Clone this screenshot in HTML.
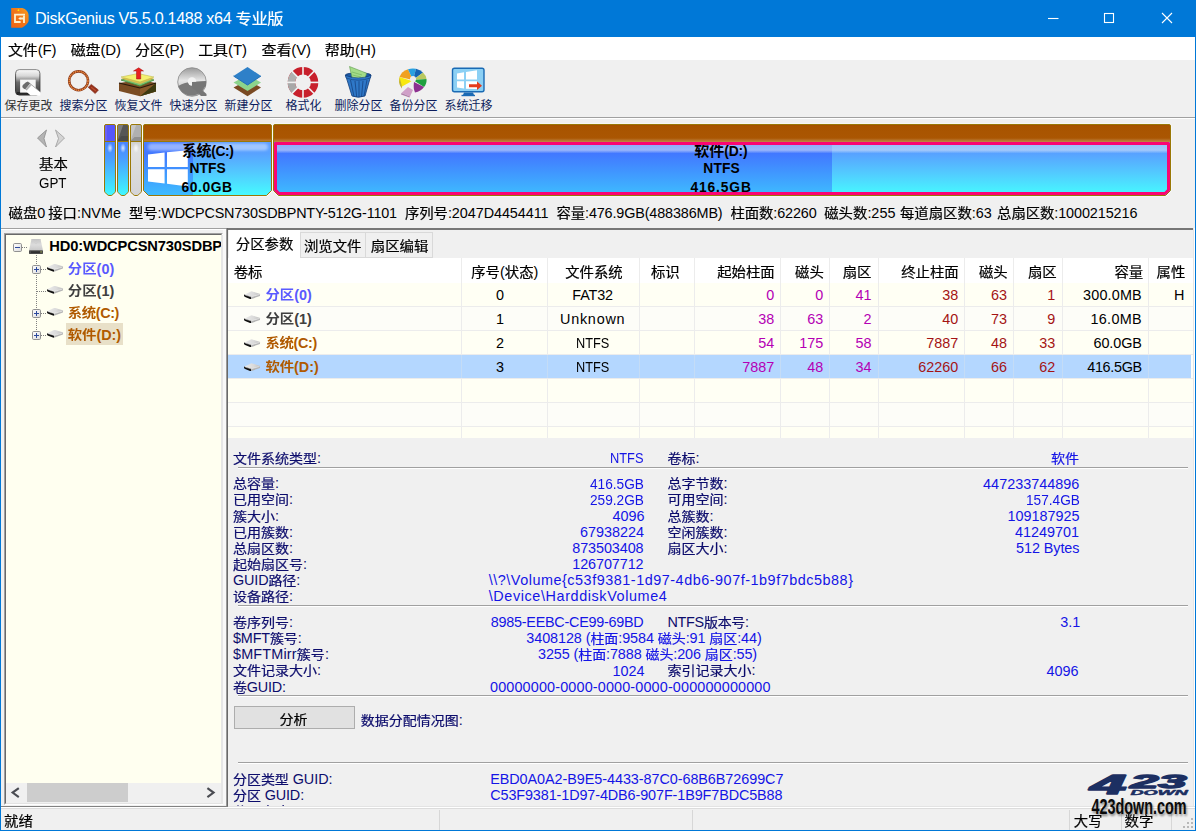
<!DOCTYPE html>
<html lang="zh-CN">
<head>
<meta charset="utf-8">
<title>DiskGenius V5.5.0.1488 x64 专业版</title>
<style>
*,*:before,*:after{box-sizing:border-box;margin:0;padding:0}
html,body{width:1196px;height:831px;overflow:hidden;background:#f0f0f0}
body{font-family:"Liberation Sans","Noto Sans CJK SC",sans-serif;font-size:13.33px;color:#000;position:relative}
.abs,.t{position:absolute;white-space:nowrap}
#win{position:absolute;left:0;top:0;width:1196px;height:831px;background:#f0f0f0;overflow:hidden}
#win:after{content:"";position:absolute;left:0;top:0;width:1196px;height:831px;border:1px solid #0078d7;border-top:none;pointer-events:none}
#title{position:absolute;left:0;top:0;width:1196px;height:37px;background:#0078d7;color:#fff}
#menu{position:absolute;left:1px;top:37px;width:1194px;height:23px;background:#fff}
#tb{position:absolute;left:0;top:60px;width:1194px;height:56px}
.tl{position:absolute;top:38px;width:57px;text-align:center;font-size:12px;line-height:16px;color:#0c1c5c}
.hl{position:absolute;left:1px;width:1194px;height:2px;border-top:1px solid #a0a0a0;border-bottom:1px solid #fff}
.pt{position:absolute;top:142px;text-align:center;font-weight:bold;font-size:13.6px;line-height:18.7px;white-space:nowrap}
#left{position:absolute;left:4px;top:233px;width:219px;height:572px;border:1px solid;border-color:#a0a0a0 #fff #fff #a0a0a0;background:#fffff0}
#left .in{position:absolute;left:0;top:0;right:0;bottom:0;border:1px solid;border-color:#696969 #e3e3e3 #e3e3e3 #696969;overflow:hidden}
#right{position:absolute;left:226px;top:228px;width:969px;height:578px;border-left:2px solid #696969;border-left-color:#9a9a9a;border-top:2px solid #767676;background:#f0f0f0;overflow:hidden}
.tab{position:absolute;border:1px solid #d9d9d9;background:#f0f0f0}
.tab.on{background:#fff;border-color:#fff}
#grid{position:absolute;left:228px;top:258px;width:965px;height:180px;background:#fffffa;overflow:hidden}
.gr{position:absolute;left:0;width:964px;height:24px;border-bottom:1px solid #ececec}
.vl{position:absolute;top:0;width:1px;height:180px;background:#ececec}
.sep{position:absolute;height:2px;border-top:1px solid #a0a0a0;border-bottom:1px solid #fff}
#status{position:absolute;left:1px;top:809px;width:1194px;height:21px;background:#f0f0f0}
.sv{position:absolute;top:1px;width:1px;height:20px;background:#d7d7d7}
.t b{font-weight:inherit;display:inline-block;transform:scaleY(0.92);line-height:inherit;-webkit-text-stroke:0.22px}
.d b{font-size:97.3%}
.B b{-webkit-text-stroke:0;transform:scaleY(0.88)}
</style>
</head>
<body>
<div id="win">
<div id="title">
<svg class="abs" style="left:10px;top:6px" width="22" height="24" viewBox="10 6 22 24">
<defs><linearGradient id="gic" x1="0" y1="1" x2="1" y2="0"><stop offset="0" stop-color="#ee6414"/><stop offset="0.5" stop-color="#f07418"/><stop offset="1" stop-color="#f8a020"/></linearGradient></defs>
<path d="M11.2 8 L22.3 8 Q25 8.4 27 11 Q28.6 13.2 28.6 15 L28.6 21 Q28.4 22.4 26.6 24.2 Q24.4 26.6 22 27.8 L11.2 27.8 Z" fill="url(#gic)"/>
<path d="M25 14.6 L15 14.6 L15 22 L20.6 22" fill="none" stroke="#faf2d0" stroke-width="1.8"/>
<path d="M24 15.4 L24 23 M24.8 18.5 L20 18.5" fill="none" stroke="#faf2d0" stroke-width="1.8"/>
<path d="M20.4 17 L18.2 18.5 L20.4 20 Z" fill="#faf2d0"/>
<path d="M18.4 9.2 L19.3 10.6 L17.5 10.6 Z" fill="#fff000"/><circle cx="18.4" cy="10.3" r="0.8" fill="#fff000"/>
</svg>
<span class="t" id="t9" style="top:8.20px;font-size:16.2px;line-height:20px;height:20px;color:#fff;letter-spacing:-0.337px;left:35.00px;">DiskGenius V5.5.0.1488 x64 <b>专业版</b></span>
<svg class="abs" style="left:1040px;top:8px" width="140" height="22" viewBox="1040 8 140 22" fill="none" stroke="#fff" stroke-width="1.1">
<path d="M1048 18.5 L1058.5 18.5"/><rect x="1104.5" y="13.5" width="9" height="9"/><path d="M1162 13 L1172 23 M1172 13 L1162 23"/>
</svg>
</div>
<div id="menu"></div>
<span class="t" id="t10" style="top:40.00px;font-size:15.0px;line-height:20px;height:20px;letter-spacing:-0.182px;left:8.00px;"><b>文件</b>(F)</span><span class="t" id="t11" style="top:40.00px;font-size:15.0px;line-height:20px;height:20px;letter-spacing:-0.113px;left:70.70px;"><b>磁盘</b>(D)</span><span class="t" id="t12" style="top:40.00px;font-size:15.0px;line-height:20px;height:20px;letter-spacing:-0.167px;left:135.00px;"><b>分区</b>(P)</span><span class="t" id="t13" style="top:40.00px;font-size:15.0px;line-height:20px;height:20px;letter-spacing:-0.092px;left:198.20px;"><b>工具</b>(T)</span><span class="t" id="t14" style="top:40.00px;font-size:15.0px;line-height:20px;height:20px;letter-spacing:-0.109px;left:261.50px;"><b>查看</b>(V)</span><span class="t" id="t15" style="top:40.00px;font-size:15.0px;line-height:20px;height:20px;letter-spacing:0.111px;left:324.70px;"><b>帮助</b>(H)</span>

<div id="tb">
<svg class="abs" style="left:0;top:0" width="500" height="56" viewBox="0 60 500 56">
<defs>
<linearGradient id="gsv" x1="0" y1="0" x2="0" y2="1"><stop offset="0" stop-color="#fafafa"/><stop offset="0.25" stop-color="#d8d8d8"/><stop offset="0.5" stop-color="#6a6a6a"/><stop offset="1" stop-color="#3c3c3c"/></linearGradient>
<linearGradient id="gsvs" x1="0" y1="0" x2="0" y2="1"><stop offset="0" stop-color="#8c8c8c"/><stop offset="0.3" stop-color="#4a4a4a"/><stop offset="1" stop-color="#2a2a2a"/></linearGradient>
<linearGradient id="gcd" x1="0" y1="0" x2="0" y2="1"><stop offset="0" stop-color="#9a9a9a"/><stop offset="0.45" stop-color="#e6e6e6"/><stop offset="1" stop-color="#b0b0b0"/></linearGradient>
</defs>
<!-- 1 save -->
<rect x="15.6" y="69.6" width="24.3" height="25.4" rx="3.6" fill="url(#gsv)" stroke="url(#gsvs)" stroke-width="1"/>
<rect x="17" y="92" width="21" height="2.6" fill="#262626"/>
<rect x="20.1" y="79.6" width="15.6" height="13" fill="#f6f6f6"/>
<path d="M27.6 81.6 L40.3 92 L40.3 95.4 L30.6 95.4 L24 89.4 Z" fill="#ffffff"/>
<path d="M27.6 81.6 L40.3 92" stroke="#8a8a8a" stroke-width="0.7" fill="none"/>
<path d="M22.4 87.2 Q22 85.6 23.4 84.4 L26 82.2 Q27.4 81.2 28.6 82.2 L30.2 83.6 L25.2 89.4 L23.4 88.2 Z" fill="#6c6c6c"/>
<path d="M25.2 89.4 L30.2 83.6 L31.8 85 L26.8 90.8 Z" fill="#c4c4c4"/>
<path d="M26 90 L31 84.3" stroke="#8c8c8c" stroke-width="0.5"/>
<!-- 2 search -->
<path d="M88.2 87.3 L91.3 84.4 L98.4 90 L95.2 93.6 Z" fill="#96301a" stroke="#7a2410" stroke-width="0.6"/>
<path d="M91.2 87.2 L96 91" stroke="#b85030" stroke-width="1.2" fill="none"/>
<circle cx="78.6" cy="80.8" r="9.4" fill="none" stroke="#8c3a1c" stroke-width="2.6"/>
<circle cx="78.6" cy="80.8" r="9.4" fill="none" stroke="#ec8a3c" stroke-width="1.4" stroke-dasharray="1.3 0.7"/>
<!-- 3 recover -->
<path d="M119 83 L140 80 L156 83 L156 91.5 L140 96.3 L119 91 Z" fill="#7a4c22"/>
<path d="M140 88 L156 83 L156 91.5 L140 96.3 Z" fill="#8a5a2a"/>
<path d="M140 96.3 L156 83 L156 91.5 Z" fill="#3c3a10"/>
<path d="M119 83 L140 88 L156 83" fill="none" stroke="#2a1a0c" stroke-width="1.2"/>
<path d="M121 80 L138 76.5 L154 80 L140 86 Z" fill="#7cc070" stroke="#3c8a3c" stroke-width="0.8"/>
<path d="M121 78.5 L138 75 L154 78.5 L140 84 Z" fill="#d8c050"/>
<path d="M121 77 L138 73.5 L154 77 L140 82 Z" fill="#f4f070" stroke="#b8b040" stroke-width="0.5"/>
<path d="M136.5 79 L136.5 71 L133.5 71 L138.7 67.8 L143.5 71 L140.7 71 L140.7 79 Z" fill="#e82020" stroke="#a01010" stroke-width="0.5"/>
<!-- 4 quick -->
<circle cx="192" cy="82" r="14.3" fill="url(#gcd)" stroke="#8a8a8a" stroke-width="0.8"/>
<path d="M178.2 86 Q185 82 192 82 L206 81 A14.3 14.3 0 0 1 178.2 86 Z" fill="#7a7a7a"/>
<circle cx="192" cy="81.5" r="4.2" fill="#f2f2f2"/>
<path d="M192 82 L206 81.5 L206 86 L201 89 L206.5 94 L206.5 96 L201 96 L195 90 L192 88 Z" fill="#767676"/>
<!-- 5 new -->
<path d="M233.5 87.5 L247.5 80 L261 87.5 L247.5 96.2 Z" fill="#7a4a22"/>
<path d="M233.5 82.5 L247.5 75 L261 82.5 L247.5 91 Z" fill="#8cd48c"/>
<path d="M233.5 76 L247.5 67 L261 76 L247.5 85 Z" fill="#2e80c8"/>
<path d="M233.5 76 L247.5 85 L261 76" fill="none" stroke="#2070b8" stroke-width="1"/>
<!-- 6 format -->
<g transform="translate(303,82.4)">
<circle r="11.6" fill="none" stroke="#c8202c" stroke-width="7.4"/>
<path d="M-1.2 -9 A9 9 0 0 0 -1.2 9" transform="rotate(38)" fill="none"/>
<path d="M-15.3 0 A15.3 15.3 0 0 1 -10.2 -11.4 L-5.3 -5.9 A7.9 7.9 0 0 0 -7.9 0 Z" fill="#b0b0b0"/>
<path d="M-15.3 0 A15.3 15.3 0 0 0 -10.2 11.4 L-5.3 5.9 A7.9 7.9 0 0 1 -7.9 0 Z" fill="#a8a8a8"/>
<g stroke="#f0f0f0" stroke-width="1.6">
<line x1="0" y1="-16" x2="0" y2="-7"/><line x1="0" y1="16" x2="0" y2="7"/>
<line x1="-16" y1="0" x2="-7" y2="0"/><line x1="16" y1="0" x2="7" y2="0"/>
<line x1="-11.6" y1="-11.6" x2="-5" y2="-5"/><line x1="11.6" y1="-11.6" x2="5" y2="-5"/>
<line x1="-11.6" y1="11.6" x2="-5" y2="5"/><line x1="11.6" y1="11.6" x2="5" y2="5"/>
</g>
</g>
<!-- 7 delete -->
<path d="M345.5 75 L371 75 L365 96 Q358 98.5 352 96 Z" fill="#2e78c8" stroke="#123c78" stroke-width="0.8"/>
<ellipse cx="358.2" cy="75.2" rx="12.8" ry="2.4" fill="#1c5aa8" stroke="#123c78" stroke-width="0.9"/>
<path d="M349.5 66.5 L366.5 73.2 L365 79 L352.5 79.5 Z" fill="#a4dc88" stroke="#5a9a4a" stroke-width="0.6"/>
<path d="M352 72 L362 75 M352.5 75 L361 77" stroke="#6cae58" stroke-width="0.6" fill="none"/>
<path d="M345.4 75.4 Q358.2 80.4 371 75.4 L370.3 78 Q358.2 82.4 346.2 78 Z" fill="#2e78c8" stroke="#123c78" stroke-width="0.6"/>
<path d="M350.5 80 L354 96.5 M355 81 L356.7 97 M359 81.2 L359 97.2 M363 81 L361.5 97 M367 80 L364 96" stroke="#123c78" stroke-width="0.7" fill="none"/>
<!-- 8 backup -->
<g transform="translate(413,80)">
<path d="M0 0 L-13.5 -3 A13.5 11.5 0 0 1 -5 -10.8 Z" fill="#f0a020"/>
<path d="M0 0 L-5 -10.8 A13.5 11.5 0 0 1 3 -11.3 Z" fill="#28a0e0"/>
<path d="M0 0 L3 -11.3 A13.5 11.5 0 0 1 10 -7.5 Z" fill="#1464b4"/>
<path d="M0 0 L10 -7.5 A13.5 11.5 0 0 1 13.5 -1 Z" fill="#b8c860"/>
<path d="M0 0 L13.5 -1 A13.5 11.5 0 0 1 11 7 Z" fill="#20a040"/>
<path d="M1 2 L11 7 A13.5 11.5 0 0 1 2 12.5 Q0 8 1 2 Z" fill="#8c3090"/>
<path d="M-1 1 L-13.5 -3 A13.5 11.5 0 0 0 -11 6.5 Z" fill="#f8e810"/>
<path d="M-13.5 -3 L-13.5 -1 A13.5 11.5 0 0 0 -11 8.5 L-11 6.5 Z" fill="#c0b030"/>
<circle cx="0" cy="-1" r="3" fill="#ececec"/>
<path d="M-5 7 L0 10 L-3 16.5 L-11.5 13 Z" fill="#d0a0c8"/>
<path d="M-11.5 13 L-3 16.5 L-3.5 17.5 L-12 14.5Z" fill="#b080a8"/>
</g>
<!-- 9 migrate -->
<rect x="452.5" y="68.2" width="31.5" height="23.5" rx="2" fill="#8cd0f4" stroke="#1a6ab4" stroke-width="1.4"/>
<path d="M457 73.5 L464 72.3 L464 79.5 L457 79.5 Z M466 72 L477 70.3 L477 79.5 L466 79.5 Z M457 81.3 L464 81.3 L464 88.6 L457 87.5 Z M466 81.3 L477 81.3 L477 89 L466 88.8Z" fill="#ffffff"/>
<path d="M469 84.3 L477 84.3 L477 81.5 L482 85.8 L477 90 L477 87.3 L469 87.3 Z" fill="#e43a1c"/>
<path d="M464 92.5 L473 92.5 L474 95 L463 95 Z" fill="#1a6ab4"/>
<rect x="461.5" y="94.8" width="13.5" height="1.4" fill="#1a6ab4"/>
</svg>
<div class="tl" style="left:0;color:#333">保存更改</div>
<div class="tl" style="left:55px">搜索分区</div>
<div class="tl" style="left:110px">恢复文件</div>
<div class="tl" style="left:165px">快速分区</div>
<div class="tl" style="left:220px">新建分区</div>
<div class="tl" style="left:275px">格式化</div>
<div class="tl" style="left:330px">删除分区</div>
<div class="tl" style="left:385px">备份分区</div>
<div class="tl" style="left:440px">系统迁移</div>
</div>
<div class="hl" style="top:117px"></div>
<div id="map">
<svg class="abs" style="left:0;top:118px" width="1194" height="82" viewBox="0 118 1194 82">
<defs>
<linearGradient id="gb" gradientUnits="userSpaceOnUse" x1="0" y1="142" x2="0" y2="195"><stop offset="0" stop-color="#4a84ff"/><stop offset="0.3" stop-color="#4a9cff"/><stop offset="1" stop-color="#40f8ff"/></linearGradient>
<linearGradient id="gu" gradientUnits="userSpaceOnUse" x1="0" y1="142" x2="0" y2="195"><stop offset="0" stop-color="#4a7eff"/><stop offset="0.22" stop-color="#4278ff"/><stop offset="1" stop-color="#3ebcff"/></linearGradient>
<linearGradient id="gf" gradientUnits="userSpaceOnUse" x1="0" y1="142" x2="0" y2="195"><stop offset="0" stop-color="#5e9cff"/><stop offset="0.22" stop-color="#58a2ff"/><stop offset="0.6" stop-color="#52ccff"/><stop offset="1" stop-color="#46faff"/></linearGradient>
<linearGradient id="gbr" gradientUnits="userSpaceOnUse" x1="0" y1="124" x2="0" y2="142"><stop offset="0" stop-color="#a04c00"/><stop offset="0.15" stop-color="#a85400"/><stop offset="0.78" stop-color="#aa5602"/><stop offset="1" stop-color="#c08848"/></linearGradient>
<linearGradient id="ggr" gradientUnits="userSpaceOnUse" x1="0" y1="142" x2="0" y2="195"><stop offset="0" stop-color="#cfcfcf"/><stop offset="0.15" stop-color="#e0e0e0"/><stop offset="1" stop-color="#d4d4d6"/></linearGradient>
<linearGradient id="ghl" x1="0" y1="0" x2="0" y2="1"><stop offset="0" stop-color="#f0f2f6" stop-opacity="0.42"/><stop offset="0.6" stop-color="#f0f2f6" stop-opacity="0.5"/><stop offset="1" stop-color="#f0f2f6" stop-opacity="0"/></linearGradient>
<radialGradient id="gsp"><stop offset="0" stop-color="#fff" stop-opacity="0.8"/><stop offset="1" stop-color="#fff" stop-opacity="0"/></radialGradient>
<filter id="bl" x="-5%" y="-50%" width="110%" height="200%"><feGaussianBlur stdDeviation="1.6 1"/></filter>

<clipPath id="cb0"><path d="M104.5 126.0 Q104.5 124.5 106.0 124.5 L114.0 124.5 Q115.5 124.5 115.5 126.0 L115.5 191.1 Q115.5 191.9 114.7 192.70000000000002 L112.7 194.7 Q111.9 195.5 111.10000000000001 195.5 L108.89999999999999 195.5 Q108.1 195.5 107.3 194.7 L105.3 192.70000000000002 Q104.5 191.9 104.5 191.1 Z"/></clipPath>
<clipPath id="cb1"><path d="M117.5 126.0 Q117.5 124.5 119.0 124.5 L127.0 124.5 Q128.5 124.5 128.5 126.0 L128.5 191.1 Q128.5 191.9 127.7 192.70000000000002 L125.7 194.7 Q124.9 195.5 124.10000000000001 195.5 L121.89999999999999 195.5 Q121.1 195.5 120.3 194.7 L118.3 192.70000000000002 Q117.5 191.9 117.5 191.1 Z"/></clipPath>
<clipPath id="cb2"><path d="M130.5 126.0 Q130.5 124.5 132.0 124.5 L140.0 124.5 Q141.5 124.5 141.5 126.0 L141.5 191.1 Q141.5 191.9 140.7 192.70000000000002 L138.70000000000002 194.7 Q137.9 195.5 137.1 195.5 L134.9 195.5 Q134.1 195.5 133.29999999999998 194.7 L131.3 192.70000000000002 Q130.5 191.9 130.5 191.1 Z"/></clipPath>
<clipPath id="cc"><path d="M143.5 126.0 Q143.5 124.5 145.0 124.5 L270.0 124.5 Q271.5 124.5 271.5 126.0 L271.5 190.5 L266.5 195.5 L148.5 195.5 L143.5 190.5 Z"/></clipPath>
<clipPath id="cd"><path d="M273.5 126.0 Q273.5 124.5 275.0 124.5 L1169.0 124.5 Q1170.5 124.5 1170.5 126.0 L1170.5 190.5 L1165.5 195.5 L278.5 195.5 L273.5 190.5 Z"/></clipPath>
</defs>
<path d="M104.5 126.0 Q104.5 124.5 106.0 124.5 L114.0 124.5 Q115.5 124.5 115.5 126.0 L115.5 191.1 Q115.5 191.9 114.7 192.70000000000002 L112.7 194.7 Q111.9 195.5 111.10000000000001 195.5 L108.89999999999999 195.5 Q108.1 195.5 107.3 194.7 L105.3 192.70000000000002 Q104.5 191.9 104.5 191.1 Z" stroke="#fff" stroke-opacity="0.55" stroke-width="2.6" fill="none"/>
<g clip-path="url(#cb0)"><rect x="104.5" y="141" width="11.0" height="56" fill="url(#gb)"/><rect x="104.5" y="124" width="11.0" height="17" fill="#5656fa"/>
<rect x="104.5" y="124" width="2.5" height="17" fill="#6c62f2"/>
<ellipse cx="110.0" cy="148" rx="3" ry="5" fill="url(#gsp)"/>
</g>
<path d="M104.5 126.0 Q104.5 124.5 106.0 124.5 L114.0 124.5 Q115.5 124.5 115.5 126.0 L115.5 191.1 Q115.5 191.9 114.7 192.70000000000002 L112.7 194.7 Q111.9 195.5 111.10000000000001 195.5 L108.89999999999999 195.5 Q108.1 195.5 107.3 194.7 L105.3 192.70000000000002 Q104.5 191.9 104.5 191.1 Z" fill="none" stroke="#9a7806" stroke-width="1"/>
<line x1="104.5" y1="141.5" x2="115.5" y2="141.5" stroke="#9a7806" stroke-width="1"/>
<path d="M117.5 126.0 Q117.5 124.5 119.0 124.5 L127.0 124.5 Q128.5 124.5 128.5 126.0 L128.5 191.1 Q128.5 191.9 127.7 192.70000000000002 L125.7 194.7 Q124.9 195.5 124.10000000000001 195.5 L121.89999999999999 195.5 Q121.1 195.5 120.3 194.7 L118.3 192.70000000000002 Q117.5 191.9 117.5 191.1 Z" stroke="#fff" stroke-opacity="0.55" stroke-width="2.6" fill="none"/>
<g clip-path="url(#cb1)"><rect x="117.5" y="141" width="11.0" height="56" fill="url(#gb)"/><rect x="117.5" y="124" width="11.0" height="17" fill="#565656"/>
<path d="M117.5 124 L123.5 124 L117.5 141 Z" fill="#7c7c7c"/><path d="M117.5 141 L121.5 136 L128.5 136 L128.5 141Z" fill="#4a4a4a"/>
<ellipse cx="123.0" cy="148" rx="3" ry="5" fill="url(#gsp)"/>
</g>
<path d="M117.5 126.0 Q117.5 124.5 119.0 124.5 L127.0 124.5 Q128.5 124.5 128.5 126.0 L128.5 191.1 Q128.5 191.9 127.7 192.70000000000002 L125.7 194.7 Q124.9 195.5 124.10000000000001 195.5 L121.89999999999999 195.5 Q121.1 195.5 120.3 194.7 L118.3 192.70000000000002 Q117.5 191.9 117.5 191.1 Z" fill="none" stroke="#9a7806" stroke-width="1"/>
<line x1="117.5" y1="141.5" x2="128.5" y2="141.5" stroke="#9a7806" stroke-width="1"/>
<path d="M130.5 126.0 Q130.5 124.5 132.0 124.5 L140.0 124.5 Q141.5 124.5 141.5 126.0 L141.5 191.1 Q141.5 191.9 140.7 192.70000000000002 L138.70000000000002 194.7 Q137.9 195.5 137.1 195.5 L134.9 195.5 Q134.1 195.5 133.29999999999998 194.7 L131.3 192.70000000000002 Q130.5 191.9 130.5 191.1 Z" stroke="#fff" stroke-opacity="0.55" stroke-width="2.6" fill="none"/>
<g clip-path="url(#cb2)"><rect x="130.5" y="141" width="11.0" height="56" fill="url(#ggr)"/><rect x="130.5" y="124" width="11.0" height="17" fill="#b0b0b0"/>
<path d="M130.5 124 L136.5 124 L130.5 141 Z" fill="#c6c6c6"/><path d="M130.5 141 L134.5 137 L141.5 137 L141.5 141Z" fill="#909090"/>
<ellipse cx="136.0" cy="148" rx="3" ry="5" fill="url(#gsp)"/>
</g>
<path d="M130.5 126.0 Q130.5 124.5 132.0 124.5 L140.0 124.5 Q141.5 124.5 141.5 126.0 L141.5 191.1 Q141.5 191.9 140.7 192.70000000000002 L138.70000000000002 194.7 Q137.9 195.5 137.1 195.5 L134.9 195.5 Q134.1 195.5 133.29999999999998 194.7 L131.3 192.70000000000002 Q130.5 191.9 130.5 191.1 Z" fill="none" stroke="#9a7806" stroke-width="1"/>
<line x1="130.5" y1="141.5" x2="141.5" y2="141.5" stroke="#9a7806" stroke-width="1"/>
<path d="M143.5 126.0 Q143.5 124.5 145.0 124.5 L270.0 124.5 Q271.5 124.5 271.5 126.0 L271.5 190.5 L266.5 195.5 L148.5 195.5 L143.5 190.5 Z" stroke="#fff" stroke-opacity="0.55" stroke-width="2.6" fill="none"/>
<g clip-path="url(#cc)"><rect x="143" y="124" width="130" height="18" fill="url(#gbr)"/><rect x="143" y="142" width="50" height="55" fill="url(#gu)"/><rect x="193" y="142" width="80" height="55" fill="url(#gf)"/>
<rect x="148" y="143.5" width="120" height="7" rx="3.5" fill="#fff" fill-opacity="0.42" filter="url(#bl)"/>
<path d="M148 154.6 L164.6 152.6 L164.6 167 L148 167 Z M167 152.3 L187.8 150.2 L187.8 167 L167 167 Z M148 169.2 L164.6 169.2 L164.6 183.5 L148 181.6 Z M167 169.2 L187.8 169.2 L187.8 186.4 L167 183.8 Z" fill="#fff"/>
</g>
<path d="M143.5 126.0 Q143.5 124.5 145.0 124.5 L270.0 124.5 Q271.5 124.5 271.5 126.0 L271.5 190.5 L266.5 195.5 L148.5 195.5 L143.5 190.5 Z" fill="none" stroke="#9a7806" stroke-width="1"/><line x1="143.5" y1="141.5" x2="271.5" y2="141.5" stroke="#9a7806"/>
<path d="M273.5 126.0 Q273.5 124.5 275.0 124.5 L1169.0 124.5 Q1170.5 124.5 1170.5 126.0 L1170.5 190.5 L1165.5 195.5 L278.5 195.5 L273.5 190.5 Z" stroke="#fff" stroke-opacity="0.55" stroke-width="2.6" fill="none"/>
<g clip-path="url(#cd)"><rect x="273" y="124" width="899" height="18" fill="url(#gbr)"/><rect x="273" y="142" width="559" height="55" fill="url(#gu)"/><rect x="832" y="142" width="340" height="55" fill="url(#gf)"/>
<rect x="277" y="145" width="890" height="8.5" fill="url(#ghl)"/></g>
<path d="M273.5 126.0 Q273.5 124.5 275.0 124.5 L1169.0 124.5 Q1170.5 124.5 1170.5 126.0 L1170.5 190.5 L1165.5 195.5 L278.5 195.5 L273.5 190.5 Z" fill="none" stroke="#9a7806" stroke-width="1"/>
<path d="M275.5 143.5 L1168.5 143.5 L1168.5 190 L1165 193.5 L279 193.5 L275.5 190 Z" fill="none" stroke="#fa0573" stroke-width="3" stroke-linejoin="round"/>
</svg>
<span class="t B" id="t16" style="top:140.60px;font-size:13.8px;line-height:20px;height:20px;font-weight:bold;letter-spacing:-0.380px;left:182.00px;"><span style="font-size:15.0px">系统</span>(C:)</span><span class="t B" id="t17" style="top:159.00px;font-size:13.8px;line-height:20px;height:20px;font-weight:bold;letter-spacing:0.019px;left:189.50px;">NTFS</span><span class="t B" id="t18" style="top:177.80px;font-size:13.8px;line-height:20px;height:20px;font-weight:bold;letter-spacing:0.608px;left:181.50px;">60.0GB</span>
<div class="abs" style="left:276px;top:145px;width:892px;height:47px;overflow:hidden"><span class="t B" id="t19" style="top:-4.40px;font-size:13.8px;line-height:20px;height:20px;font-weight:bold;letter-spacing:-0.068px;left:418.30px;"><span style="font-size:15.0px">软件</span>(D:)</span><span class="t B" id="t20" style="top:14.00px;font-size:13.8px;line-height:20px;height:20px;font-weight:bold;letter-spacing:0.144px;left:427.30px;">NTFS</span><span class="t B" id="t21" style="top:32.80px;font-size:13.8px;line-height:20px;height:20px;font-weight:bold;letter-spacing:0.854px;left:414.50px;">416.5GB</span></div>
<svg class="abs" style="left:34px;top:128px" width="36" height="22" viewBox="0 0 36 22"><path d="M12.5 2 L3.5 10 L12.5 19 L10 10.5 Z" fill="#b4b4b4" stroke="#8c8c8c" stroke-width="0.8"/><path d="M21.5 2 L30.5 10 L21.5 19 L24.5 10.5 Z" fill="#d4d4d4" stroke="#9a9a9a" stroke-width="0.8"/></svg>
<span class="t" id="t22" style="top:154.20px;font-size:14.4px;line-height:20px;height:20px;left:39.00px;"><b>基本</b></span><span class="t" id="t23" style="top:172.70px;font-size:14.4px;line-height:20px;height:20px;transform:scaleX(0.9293);transform-origin:0 50%;left:39.00px;">GPT</span>
</div>
<div id="info">
<span class="t" id="t0" style="top:202.50px;font-size:14.4px;line-height:20px;height:20px;left:8.50px;"><b>磁盘</b>0</span>
<span class="t" id="t1" style="top:202.50px;font-size:14.4px;line-height:20px;height:20px;letter-spacing:-0.007px;left:48.20px;"><b>接口</b>:NVMe</span>
<span class="t" id="t2" style="top:202.50px;font-size:14.4px;line-height:20px;height:20px;letter-spacing:-0.187px;left:129.00px;"><b>型号</b>:WDCPCSN730SDBPNTY-512G-1101</span>
<span class="t" id="t3" style="top:202.50px;font-size:14.4px;line-height:20px;height:20px;letter-spacing:-0.056px;left:404.90px;"><b>序列号</b>:2047D4454411</span>
<span class="t" id="t4" style="top:202.50px;font-size:14.4px;line-height:20px;height:20px;letter-spacing:-0.138px;left:556.50px;"><b>容量</b>:476.9GB(488386MB)</span>
<span class="t" id="t5" style="top:202.50px;font-size:14.4px;line-height:20px;height:20px;letter-spacing:-0.123px;left:730.50px;"><b>柱面数</b>:62260</span>
<span class="t" id="t6" style="top:202.50px;font-size:14.4px;line-height:20px;height:20px;left:824.20px;"><b>磁头数</b>:255</span>
<span class="t" id="t7" style="top:202.50px;font-size:14.4px;line-height:20px;height:20px;left:899.90px;"><b>每道扇区数</b>:63</span>
<span class="t" id="t8" style="top:202.50px;font-size:14.4px;line-height:20px;height:20px;letter-spacing:-0.092px;left:997.10px;"><b>总扇区数</b>:1000215216</span>
</div>
<div class="hl" style="top:228px"></div>
<div id="left"><div class="in"></div></div>
<svg class="abs" style="left:6px;top:236px" width="120" height="110" viewBox="6 236 120 110">
<defs>
<linearGradient id="gbx" x1="0" y1="0" x2="1" y2="1"><stop offset="0" stop-color="#fff"/><stop offset="1" stop-color="#dcdcdc"/></linearGradient>
<linearGradient id="ghd" x1="0" y1="0" x2="0" y2="1"><stop offset="0" stop-color="#c4c4c4"/><stop offset="0.5" stop-color="#dcdcdc"/><stop offset="1" stop-color="#c8c8c8"/></linearGradient>
<linearGradient id="gdr" x1="0" y1="0" x2="1" y2="0"><stop offset="0" stop-color="#ececec"/><stop offset="0.6" stop-color="#dadada"/><stop offset="1" stop-color="#c0c0c0"/></linearGradient>
<g id="drv"><path d="M0.3 3.5 L7.2 0.2 Q7.8 0 8.6 0.2 L15.8 2.5 Q16.5 2.9 16.2 3.3 L7.3 5.7 Z" fill="url(#gdr)"/><path d="M0.2 3.4 L7.3 5.6 L7.2 7.8 Q6.8 7.9 6.2 7.7 L0.8 5.6 Q0 5.2 0.2 3.4 Z" fill="#0e0e0e"/><path d="M7.3 5.6 L16.3 3 L16.1 4.8 L7.9 7.7 Q7.5 7.9 7.2 7.8 Z" fill="#b4b4b4"/><path d="M1 3.7 L7.3 5.7 L15.6 3.3" fill="none" stroke="#f6f6f6" stroke-width="0.5"/></g>
<g id="bx"><rect x="0.5" y="0.5" width="8" height="8" rx="1.2" fill="url(#gbx)" stroke="#919191"/></g>
</defs>
<g stroke="#808080" stroke-width="1" stroke-dasharray="1 1" fill="none">
<path d="M36.5 255 L36.5 336"/><path d="M22 247.5 L28 247.5"/>
<path d="M41 269.5 L46 269.5"/><path d="M37 291.5 L46 291.5"/><path d="M41 313.5 L46 313.5"/><path d="M41 335.5 L46 335.5"/>
</g>
<use href="#bx" x="13" y="243"/><path d="M15 247.5 L20 247.5" stroke="#2c4a9c" stroke-width="1"/>
<use href="#bx" x="32" y="265"/><path d="M34 269.5 L39 269.5 M36.5 267 L36.5 272" stroke="#2c4a9c" stroke-width="1"/>
<use href="#bx" x="32" y="309"/><path d="M34 313.5 L39 313.5 M36.5 311 L36.5 316" stroke="#2c4a9c" stroke-width="1"/>
<use href="#bx" x="32" y="331"/><path d="M34 335.5 L39 335.5 M36.5 333 L36.5 338" stroke="#2c4a9c" stroke-width="1"/>
<path d="M31.5 239 L40.5 239 L43 250.5 L29 250.5 Z" fill="url(#ghd)"/><path d="M31.5 239 L36 244 L40.5 239" fill="none" stroke="#cfcfcf" stroke-width="0.8"/>
<rect x="29" y="250.3" width="14" height="3.6" rx="0.6" fill="#4a4a4a"/><rect x="31" y="251.6" width="9" height="1" fill="#202020"/><rect x="40.6" y="251.4" width="1" height="1" fill="#b8c840"/>
<use href="#drv" x="46.8" y="263.8"/><use href="#drv" x="46.8" y="285.8"/><use href="#drv" x="46.8" y="307.8"/><use href="#drv" x="46.8" y="329.8"/>
<rect x="66" y="323" width="57" height="22" fill="#e8e0c8"/>
</svg>
<div class="abs" style="left:6px;top:236px;width:215.5px;height:24px;overflow:hidden"><span class="t B" id="t24" style="top:-0.40px;font-size:14.7px;line-height:20px;height:20px;font-weight:bold;letter-spacing:-0.154px;left:43.30px;">HD0:WDCPCSN730SDBP</span></div>
<span class="t B" id="t25" style="top:258.60px;font-size:14.4px;line-height:20px;height:20px;color:#5a5aff;font-weight:bold;left:67.80px;"><b>分区</b>(0)</span>
<span class="t B" id="t26" style="top:280.60px;font-size:14.4px;line-height:20px;height:20px;color:#404040;font-weight:bold;left:67.80px;"><b>分区</b>(1)</span>
<span class="t B" id="t27" style="top:302.60px;font-size:14.4px;line-height:20px;height:20px;color:#b05a00;font-weight:bold;letter-spacing:-0.394px;left:67.80px;"><b>系统</b>(C:)</span>
<span class="t B" id="t28" style="top:324.60px;font-size:14.4px;line-height:20px;height:20px;color:#b05a00;font-weight:bold;letter-spacing:-0.081px;left:67.80px;"><b>软件</b>(D:)</span>
<div class="abs" style="left:6px;top:783px;width:215px;height:20px;background:#f0f0f0">
<div class="abs" style="left:21px;top:0;width:101px;height:19px;background:#cdcdcd"></div>
<svg class="abs" style="left:0;top:0" width="215" height="20" viewBox="0 0 215 20" fill="none" stroke="#4a4c52" stroke-width="2.1"><path d="M12.8 5.1 L6.6 9.6 L12.8 14.1"/><path d="M201.4 5.1 L207.6 9.6 L201.4 14.1"/></svg>
</div>

<div id="right"></div>
<div class="abs" style="left:227px;top:228px;width:1px;height:578px;background:#696969"></div>
<div class="abs" style="left:1193px;top:228px;width:1px;height:578px;background:#e6e6e6"></div>
<div class="abs" style="left:1194px;top:228px;width:1px;height:579px;background:#fff"></div>
<div class="abs" style="left:221px;top:235px;width:2px;height:569px;background:#e6e6e6"></div>
<div class="abs" style="left:223px;top:230px;width:3px;height:575px;background:#f8f8f8"></div>
<div class="tab on" style="left:229px;top:230px;width:71px;height:29px"></div>
<div class="tab" style="left:300px;top:232px;width:66px;height:26px"></div>
<div class="tab" style="left:365px;top:232px;width:68px;height:26px"></div>
<span class="t" id="t29" style="top:234.40px;font-size:14.4px;line-height:20px;height:20px;left:235.80px;"><b>分区参数</b></span><span class="t" id="t30" style="top:236.40px;font-size:14.4px;line-height:20px;height:20px;left:303.90px;"><b>浏览文件</b></span><span class="t" id="t31" style="top:236.40px;font-size:14.4px;line-height:20px;height:20px;left:370.80px;"><b>扇区编辑</b></span>
<div id="grid">
<div class="abs" style="left:0;top:0;width:965px;height:25px;background:#fff"></div>
<div class="abs" style="left:0;top:25px;width:965px;height:24px;background:#fffff4"></div>
<div class="abs" style="left:0;top:49px;width:965px;height:24px;background:#fdfdf8"></div>
<div class="abs" style="left:0;top:73px;width:965px;height:24px;background:#fffff4"></div>
<div class="abs" style="left:0;top:121px;width:965px;height:24px;background:#fffff4"></div>
<div class="abs" style="left:0;top:145px;width:965px;height:24px;background:#fdfdf8"></div>
<div class="abs" style="left:0;top:169px;width:965px;height:11px;background:#fffff4"></div>
<div class="abs" style="left:0;top:48px;width:965px;height:1px;background:#ececec"></div>
<div class="abs" style="left:0;top:72px;width:965px;height:1px;background:#ececec"></div>
<div class="abs" style="left:0;top:96px;width:965px;height:1px;background:#ececec"></div>
<div class="abs" style="left:0;top:120px;width:965px;height:1px;background:#ececec"></div>
<div class="abs" style="left:0;top:144px;width:965px;height:1px;background:#ececec"></div>
<div class="abs" style="left:0;top:168px;width:965px;height:1px;background:#ececec"></div>
<div class="vl" style="left:233px"></div>
<div class="vl" style="left:319px"></div>
<div class="vl" style="left:411px"></div>
<div class="vl" style="left:466px"></div>
<div class="vl" style="left:552px"></div>
<div class="vl" style="left:601px"></div>
<div class="vl" style="left:650px"></div>
<div class="vl" style="left:736px"></div>
<div class="vl" style="left:785px"></div>
<div class="vl" style="left:834px"></div>
<div class="vl" style="left:920px"></div>
<div class="abs" style="left:0;top:97px;width:963px;height:23px;background:#b4d7ff"></div>
<div class="abs" style="left:233px;top:97px;width:1px;height:23px;background:#c4dcf6"></div>
<div class="abs" style="left:319px;top:97px;width:1px;height:23px;background:#c4dcf6"></div>
<div class="abs" style="left:411px;top:97px;width:1px;height:23px;background:#c4dcf6"></div>
<div class="abs" style="left:466px;top:97px;width:1px;height:23px;background:#c4dcf6"></div>
<div class="abs" style="left:552px;top:97px;width:1px;height:23px;background:#c4dcf6"></div>
<div class="abs" style="left:601px;top:97px;width:1px;height:23px;background:#c4dcf6"></div>
<div class="abs" style="left:650px;top:97px;width:1px;height:23px;background:#c4dcf6"></div>
<div class="abs" style="left:736px;top:97px;width:1px;height:23px;background:#c4dcf6"></div>
<div class="abs" style="left:785px;top:97px;width:1px;height:23px;background:#c4dcf6"></div>
<div class="abs" style="left:834px;top:97px;width:1px;height:23px;background:#c4dcf6"></div>
<div class="abs" style="left:920px;top:97px;width:1px;height:23px;background:#c4dcf6"></div>
</div>
<span class="t" id="t32" style="top:261.60px;font-size:14.4px;line-height:20px;height:20px;left:233.70px;"><b>卷标</b></span><span class="t" id="t33" style="top:261.60px;font-size:14.4px;line-height:20px;height:20px;left:471.20px;"><b>序号</b>(<b>状态</b>)</span><span class="t" id="t34" style="top:261.60px;font-size:14.4px;line-height:20px;height:20px;left:565.20px;"><b>文件系统</b></span><span class="t" id="t35" style="top:261.60px;font-size:14.4px;line-height:20px;height:20px;left:650.90px;"><b>标识</b></span>
<span class="t" id="t36" style="top:261.60px;font-size:14.4px;line-height:20px;height:20px;left:717.20px;"><b>起始柱面</b></span><span class="t" id="t37" style="top:261.60px;font-size:14.4px;line-height:20px;height:20px;left:795.00px;"><b>磁头</b></span><span class="t" id="t38" style="top:261.60px;font-size:14.4px;line-height:20px;height:20px;left:842.70px;"><b>扇区</b></span><span class="t" id="t39" style="top:261.60px;font-size:14.4px;line-height:20px;height:20px;left:901.20px;"><b>终止柱面</b></span><span class="t" id="t40" style="top:261.60px;font-size:14.4px;line-height:20px;height:20px;left:978.90px;"><b>磁头</b></span><span class="t" id="t41" style="top:261.60px;font-size:14.4px;line-height:20px;height:20px;left:1027.90px;"><b>扇区</b></span><span class="t" id="t42" style="top:261.60px;font-size:14.4px;line-height:20px;height:20px;left:1114.40px;"><b>容量</b></span><span class="t" id="t43" style="top:261.60px;font-size:14.4px;line-height:20px;height:20px;left:1156.50px;"><b>属性</b></span>
<svg class="abs" style="left:243px;top:290px" width="20" height="84" viewBox="0 0 20 84">
<use href="#drv" x="0.8" y="1.2"/>
<use href="#drv" x="0.8" y="25.2"/>
<use href="#drv" x="0.8" y="49.2"/>
<use href="#drv" x="0.8" y="73.2"/>
</svg>
<span class="t B" id="t44" style="top:284.70px;font-size:14.4px;line-height:20px;height:20px;color:#5a5aff;font-weight:bold;left:265.40px;"><b>分区</b>(0)</span>
<span class="t" id="t45" style="top:285.00px;font-size:14.4px;line-height:20px;height:20px;left:495.90px;">0</span>
<span class="t" id="t46" style="top:285.00px;font-size:14.4px;line-height:20px;height:20px;letter-spacing:-0.126px;left:572.30px;">FAT32</span>
<span class="t" id="t116" style="top:285.00px;font-size:14.4px;line-height:20px;height:20px;color:#b400b4;right:421.70px;">0</span>
<span class="t" id="t117" style="top:285.00px;font-size:14.4px;line-height:20px;height:20px;color:#b400b4;right:372.70px;">0</span>
<span class="t" id="t118" style="top:285.00px;font-size:14.4px;line-height:20px;height:20px;color:#b400b4;right:324.40px;">41</span>
<span class="t" id="t119" style="top:285.00px;font-size:14.4px;line-height:20px;height:20px;color:#a41414;right:237.70px;">38</span>
<span class="t" id="t120" style="top:285.00px;font-size:14.4px;line-height:20px;height:20px;color:#a41414;right:189.00px;">63</span>
<span class="t" id="t121" style="top:285.00px;font-size:14.4px;line-height:20px;height:20px;color:#a41414;right:140.80px;">1</span>
<span class="t" id="t47" style="top:285.00px;font-size:14.4px;line-height:20px;height:20px;letter-spacing:0.186px;left:1083.00px;">300.0MB</span>
<span class="t" id="t48" style="top:285.00px;font-size:14.4px;line-height:20px;height:20px;letter-spacing:0.397px;left:1173.90px;">H</span>
<span class="t B" id="t49" style="top:308.70px;font-size:14.4px;line-height:20px;height:20px;color:#404040;font-weight:bold;left:265.40px;"><b>分区</b>(1)</span>
<span class="t" id="t50" style="top:309.00px;font-size:14.4px;line-height:20px;height:20px;left:495.90px;">1</span>
<span class="t" id="t51" style="top:309.00px;font-size:14.4px;line-height:20px;height:20px;letter-spacing:0.758px;left:560.00px;">Unknown</span>
<span class="t" id="t122" style="top:309.00px;font-size:14.4px;line-height:20px;height:20px;color:#b400b4;right:421.70px;">38</span>
<span class="t" id="t123" style="top:309.00px;font-size:14.4px;line-height:20px;height:20px;color:#b400b4;right:372.70px;">63</span>
<span class="t" id="t124" style="top:309.00px;font-size:14.4px;line-height:20px;height:20px;color:#b400b4;right:324.40px;">2</span>
<span class="t" id="t125" style="top:309.00px;font-size:14.4px;line-height:20px;height:20px;color:#a41414;right:237.70px;">40</span>
<span class="t" id="t126" style="top:309.00px;font-size:14.4px;line-height:20px;height:20px;color:#a41414;right:189.00px;">73</span>
<span class="t" id="t127" style="top:309.00px;font-size:14.4px;line-height:20px;height:20px;color:#a41414;right:140.80px;">9</span>
<span class="t" id="t52" style="top:309.00px;font-size:14.4px;line-height:20px;height:20px;letter-spacing:0.300px;left:1090.50px;">16.0MB</span>
<span class="t B" id="t53" style="top:332.70px;font-size:14.4px;line-height:20px;height:20px;color:#b05a00;font-weight:bold;letter-spacing:-0.331px;left:265.40px;"><b>系统</b>(C:)</span>
<span class="t" id="t54" style="top:333.00px;font-size:14.4px;line-height:20px;height:20px;left:495.90px;">2</span>
<span class="t" id="t55" style="top:333.00px;font-size:14.4px;line-height:20px;height:20px;transform:scaleX(0.8862);transform-origin:0 50%;left:576.20px;">NTFS</span>
<span class="t" id="t128" style="top:333.00px;font-size:14.4px;line-height:20px;height:20px;color:#b400b4;right:421.70px;">54</span>
<span class="t" id="t129" style="top:333.00px;font-size:14.4px;line-height:20px;height:20px;color:#b400b4;right:372.70px;">175</span>
<span class="t" id="t130" style="top:333.00px;font-size:14.4px;line-height:20px;height:20px;color:#b400b4;right:324.40px;">58</span>
<span class="t" id="t131" style="top:333.00px;font-size:14.4px;line-height:20px;height:20px;color:#a41414;right:237.70px;">7887</span>
<span class="t" id="t132" style="top:333.00px;font-size:14.4px;line-height:20px;height:20px;color:#a41414;right:189.00px;">48</span>
<span class="t" id="t133" style="top:333.00px;font-size:14.4px;line-height:20px;height:20px;color:#a41414;right:140.80px;">33</span>
<span class="t" id="t56" style="top:333.00px;font-size:14.4px;line-height:20px;height:20px;letter-spacing:-0.067px;left:1093.50px;">60.0GB</span>
<span class="t B" id="t57" style="top:356.70px;font-size:14.4px;line-height:20px;height:20px;color:#b05a00;font-weight:bold;letter-spacing:-0.034px;left:265.40px;"><b>软件</b>(D:)</span>
<span class="t" id="t58" style="top:357.00px;font-size:14.4px;line-height:20px;height:20px;left:495.90px;">3</span>
<span class="t" id="t59" style="top:357.00px;font-size:14.4px;line-height:20px;height:20px;transform:scaleX(0.8862);transform-origin:0 50%;left:576.20px;">NTFS</span>
<span class="t" id="t134" style="top:357.00px;font-size:14.4px;line-height:20px;height:20px;color:#b400b4;right:421.70px;">7887</span>
<span class="t" id="t135" style="top:357.00px;font-size:14.4px;line-height:20px;height:20px;color:#b400b4;right:372.70px;">48</span>
<span class="t" id="t136" style="top:357.00px;font-size:14.4px;line-height:20px;height:20px;color:#b400b4;right:324.40px;">34</span>
<span class="t" id="t137" style="top:357.00px;font-size:14.4px;line-height:20px;height:20px;color:#a41414;right:237.70px;">62260</span>
<span class="t" id="t138" style="top:357.00px;font-size:14.4px;line-height:20px;height:20px;color:#a41414;right:189.00px;">66</span>
<span class="t" id="t139" style="top:357.00px;font-size:14.4px;line-height:20px;height:20px;color:#a41414;right:140.80px;">62</span>
<span class="t" id="t60" style="top:357.00px;font-size:14.4px;line-height:20px;height:20px;letter-spacing:-0.302px;left:1087.20px;">416.5GB</span>
<span class="t d" id="t61" style="top:448.00px;font-size:14.4px;line-height:20px;height:20px;color:#0c0c6c;left:232.90px;"><b>文件系统类型</b>:</span>
<span class="t d" id="t62" style="top:448.00px;font-size:14.4px;line-height:20px;height:20px;color:#1414e6;transform:scaleX(0.8915);transform-origin:0 50%;left:610.00px;">NTFS</span>
<span class="t d" id="t63" style="top:448.00px;font-size:14.4px;line-height:20px;height:20px;color:#0c0c6c;left:667.50px;"><b>卷标</b>:</span>
<span class="t d" id="t64" style="top:448.00px;font-size:14.4px;line-height:20px;height:20px;color:#1414e6;left:1051.00px;"><b>软件</b></span>
<div class="sep" style="left:238px;top:467px;width:950px"></div>
<span class="t d" id="t65" style="top:473.20px;font-size:14.4px;line-height:20px;height:20px;color:#0c0c6c;left:233.00px;"><b>总容量</b>:</span>
<span class="t d" id="t66" style="top:489.35px;font-size:14.4px;line-height:20px;height:20px;color:#0c0c6c;left:233.00px;"><b>已用空间</b>:</span>
<span class="t d" id="t67" style="top:505.50px;font-size:14.4px;line-height:20px;height:20px;color:#0c0c6c;left:233.00px;"><b>簇大小</b>:</span>
<span class="t d" id="t68" style="top:521.65px;font-size:14.4px;line-height:20px;height:20px;color:#0c0c6c;left:233.00px;"><b>已用簇数</b>:</span>
<span class="t d" id="t69" style="top:537.80px;font-size:14.4px;line-height:20px;height:20px;color:#0c0c6c;left:233.00px;"><b>总扇区数</b>:</span>
<span class="t d" id="t70" style="top:553.95px;font-size:14.4px;line-height:20px;height:20px;color:#0c0c6c;left:233.00px;"><b>起始扇区号</b>:</span>
<span class="t d" id="t71" style="top:570.10px;font-size:14.4px;line-height:20px;height:20px;color:#0c0c6c;letter-spacing:-0.142px;left:233.00px;">GUID<b>路径</b>:</span>
<span class="t d" id="t72" style="top:586.25px;font-size:14.4px;line-height:20px;height:20px;color:#0c0c6c;left:233.00px;"><b>设备路径</b>:</span>
<span class="t d" id="t73" style="top:473.50px;font-size:14.4px;line-height:20px;height:20px;color:#1414e6;transform:scaleX(0.9505);transform-origin:0 50%;left:589.50px;">416.5GB</span>
<span class="t d" id="t74" style="top:489.65px;font-size:14.4px;line-height:20px;height:20px;color:#1414e6;transform:scaleX(0.9505);transform-origin:0 50%;left:589.50px;">259.2GB</span>
<span class="t d" id="t75" style="top:505.80px;font-size:14.4px;line-height:20px;height:20px;color:#1414e6;left:612.50px;">4096</span>
<span class="t d" id="t76" style="top:521.95px;font-size:14.4px;line-height:20px;height:20px;color:#1414e6;left:579.90px;">67938224</span>
<span class="t d" id="t77" style="top:538.10px;font-size:14.4px;line-height:20px;height:20px;color:#1414e6;letter-spacing:-0.093px;left:572.30px;">873503408</span>
<span class="t d" id="t78" style="top:554.25px;font-size:14.4px;line-height:20px;height:20px;color:#1414e6;letter-spacing:-0.093px;left:572.30px;">126707712</span>
<span class="t d" id="t79" style="top:570.10px;font-size:14.4px;line-height:20px;height:20px;color:#1414e6;letter-spacing:0.532px;left:488.70px;">\\?\Volume{c53f9381-1d97-4db6-907f-1b9f7bdc5b88}</span>
<span class="t d" id="t80" style="top:586.25px;font-size:14.4px;line-height:20px;height:20px;color:#1414e6;letter-spacing:0.606px;left:488.70px;">\Device\HarddiskVolume4</span>
<span class="t d" id="t81" style="top:473.20px;font-size:14.4px;line-height:20px;height:20px;color:#0c0c6c;left:667.50px;"><b>总字节数</b>:</span>
<span class="t d" id="t82" style="top:489.35px;font-size:14.4px;line-height:20px;height:20px;color:#0c0c6c;left:667.50px;"><b>可用空间</b>:</span>
<span class="t d" id="t83" style="top:505.50px;font-size:14.4px;line-height:20px;height:20px;color:#0c0c6c;left:667.50px;"><b>总簇数</b>:</span>
<span class="t d" id="t84" style="top:521.65px;font-size:14.4px;line-height:20px;height:20px;color:#0c0c6c;left:667.50px;"><b>空闲簇数</b>:</span>
<span class="t d" id="t85" style="top:537.80px;font-size:14.4px;line-height:20px;height:20px;color:#0c0c6c;left:667.50px;"><b>扇区大小</b>:</span>
<span class="t d" id="t86" style="top:473.50px;font-size:14.4px;line-height:20px;height:20px;color:#1414e6;letter-spacing:0.021px;left:983.10px;">447233744896</span>
<span class="t d" id="t87" style="top:489.65px;font-size:14.4px;line-height:20px;height:20px;color:#1414e6;transform:scaleX(0.9487);transform-origin:0 50%;left:1025.50px;">157.4GB</span>
<span class="t d" id="t88" style="top:505.80px;font-size:14.4px;line-height:20px;height:20px;color:#1414e6;letter-spacing:-0.015px;left:1007.50px;">109187925</span>
<span class="t d" id="t89" style="top:521.95px;font-size:14.4px;line-height:20px;height:20px;color:#1414e6;left:1014.90px;">41249701</span>
<span class="t d" id="t90" style="top:538.10px;font-size:14.4px;line-height:20px;height:20px;color:#1414e6;letter-spacing:-0.079px;left:1016.10px;">512 Bytes</span>
<div class="sep" style="left:238px;top:605px;width:950px"></div>
<span class="t d" id="t91" style="top:611.90px;font-size:14.4px;line-height:20px;height:20px;color:#0c0c6c;left:233.00px;"><b>卷序列号</b>:</span>
<span class="t d" id="t92" style="top:628.05px;font-size:14.4px;line-height:20px;height:20px;color:#0c0c6c;letter-spacing:-0.158px;left:233.00px;">$MFT<b>簇号</b>:</span>
<span class="t d" id="t93" style="top:644.20px;font-size:14.4px;line-height:20px;height:20px;color:#0c0c6c;letter-spacing:0.169px;left:233.00px;">$MFTMirr<b>簇号</b>:</span>
<span class="t d" id="t94" style="top:660.35px;font-size:14.4px;line-height:20px;height:20px;color:#0c0c6c;left:233.00px;"><b>文件记录大小</b>:</span>
<span class="t d" id="t95" style="top:676.50px;font-size:14.4px;line-height:20px;height:20px;color:#0c0c6c;letter-spacing:-0.208px;left:233.00px;"><b>卷</b>GUID:</span>
<span class="t d" id="t96" style="top:612.10px;font-size:14.4px;line-height:20px;height:20px;color:#1414e6;letter-spacing:-0.257px;left:490.80px;">8985-EEBC-CE99-69BD</span>
<span class="t d" id="t97" style="top:628.05px;font-size:14.4px;line-height:20px;height:20px;color:#1414e6;letter-spacing:-0.080px;left:526.30px;">3408128 (<b>柱面</b>:9584 <b>磁头</b>:91 <b>扇区</b>:44)</span>
<span class="t d" id="t98" style="top:644.20px;font-size:14.4px;line-height:20px;height:20px;color:#1414e6;letter-spacing:-0.096px;left:538.00px;">3255 (<b>柱面</b>:7888 <b>磁头</b>:206 <b>扇区</b>:55)</span>
<span class="t d" id="t99" style="top:660.55px;font-size:14.4px;line-height:20px;height:20px;color:#1414e6;left:612.50px;">1024</span>
<span class="t d" id="t100" style="top:676.70px;font-size:14.4px;line-height:20px;height:20px;color:#1414e6;letter-spacing:0.150px;left:490.00px;">00000000-0000-0000-0000-000000000000</span>
<span class="t d" id="t101" style="top:611.90px;font-size:14.4px;line-height:20px;height:20px;color:#0c0c6c;letter-spacing:-0.291px;left:667.50px;">NTFS<b>版本号</b>:</span>
<span class="t d" id="t102" style="top:612.10px;font-size:14.4px;line-height:20px;height:20px;color:#1414e6;left:1060.30px;">3.1</span>
<span class="t d" id="t103" style="top:660.35px;font-size:14.4px;line-height:20px;height:20px;color:#0c0c6c;left:667.50px;"><b>索引记录大小</b>:</span>
<span class="t d" id="t104" style="top:660.55px;font-size:14.4px;line-height:20px;height:20px;color:#1414e6;left:1046.50px;">4096</span>
<div class="sep" style="left:238px;top:695px;width:950px"></div>
<div class="abs" style="left:234px;top:706px;width:121px;height:23px;background:#e1e1e1;border:1px solid #adadad"></div>
<span class="t d" id="t105" style="top:708.60px;font-size:14.4px;line-height:20px;height:20px;left:279.60px;"><b>分析</b></span>
<span class="t d" id="t106" style="top:710.30px;font-size:14.4px;line-height:20px;height:20px;color:#0c0c6c;left:360.70px;"><b>数据分配情况图</b>:</span>
<div class="sep" style="left:238px;top:762px;width:950px"></div>
<span class="t d" id="t107" style="top:769.00px;font-size:14.4px;line-height:20px;height:20px;color:#0c0c6c;letter-spacing:-0.057px;left:233.00px;"><b>分区类型</b> GUID:</span>
<span class="t d" id="t108" style="top:785.20px;font-size:14.4px;line-height:20px;height:20px;color:#0c0c6c;letter-spacing:-0.119px;left:233.00px;"><b>分区</b> GUID:</span>
<span class="t d" id="t109" style="top:769.30px;font-size:14.4px;line-height:20px;height:20px;color:#1414e6;letter-spacing:-0.056px;left:490.20px;">EBD0A0A2-B9E5-4433-87C0-68B6B72699C7</span>
<span class="t d" id="t110" style="top:785.40px;font-size:14.4px;line-height:20px;height:20px;color:#1414e6;letter-spacing:-0.104px;left:490.20px;">C53F9381-1D97-4DB6-907F-1B9F7BDC5B88</span>
<div class="abs" style="left:228px;top:797px;width:966px;height:9.6px;overflow:hidden">
<span class="t" id="t111" style="top:4.60px;font-size:14.4px;line-height:20px;height:20px;color:#0c0c6c;left:5.00px;"><b>分区名字</b>:</span><span class="t" id="t112" style="top:4.80px;font-size:14.4px;line-height:20px;height:20px;color:#1414e6;letter-spacing:0.295px;left:262.20px;">Basic data partition</span>
</div>
<div class="abs" style="left:1px;top:806px;width:227px;height:1px;background:#828282"></div>
<div class="abs" style="left:228px;top:806px;width:967px;height:1px;background:#e3e3e3"></div>
<div class="abs" style="left:1px;top:807px;width:1194px;height:1px;background:#fff"></div>
<div class="abs" style="left:1px;top:808px;width:1194px;height:1px;background:#dcdcdc"></div>
<div id="status">
<div class="sv" style="left:438px"></div><div class="sv" style="left:691px"></div><div class="sv" style="left:1068px"></div><div class="sv" style="left:1119.5px"></div><div class="sv" style="left:1170px"></div>
<svg class="abs" style="left:1181px;top:8px" width="14" height="14" viewBox="0 0 14 14" fill="#b8b8b8"><rect x="9" y="9" width="2" height="2"/><rect x="9" y="5" width="2" height="2"/><rect x="9" y="1" width="2" height="2"/><rect x="5" y="9" width="2" height="2"/><rect x="5" y="5" width="2" height="2"/><rect x="1" y="9" width="2" height="2"/></svg>
</div>
<span class="t" id="t113" style="top:810.80px;font-size:14.4px;line-height:20px;height:20px;left:4.00px;"><b>就绪</b></span><span class="t" id="t114" style="top:810.80px;font-size:14.4px;line-height:20px;height:20px;left:1073.70px;"><b>大写</b></span><span class="t" id="t115" style="top:810.80px;font-size:14.4px;line-height:20px;height:20px;left:1124.50px;"><b>数字</b></span>
<svg class="abs" style="left:1080px;top:770px" width="112" height="50" viewBox="1080 770 112 50">
<defs><filter id="sh" x="-10%" y="-30%" width="120%" height="160%"><feGaussianBlur stdDeviation="1.3"/></filter></defs>
<g font-family="Liberation Sans,sans-serif" font-weight="bold" font-style="italic" fill="#1c2f62" stroke="#1c2f62" stroke-linejoin="round">
<text transform="translate(1090.3,794.3) scale(2.4,1)" font-size="27" stroke-width="1.5">4</text>
<text transform="translate(1130.6,788.2) scale(2.75,1)" font-size="18.2" stroke-width="1.4">23</text>
<text transform="translate(1130.5,795.2) scale(2.45,1)" font-size="7.4" stroke-width="0.45">DOWN</text>
</g>
<g font-family="Liberation Sans,sans-serif" font-weight="bold" font-size="22.6">
<text transform="translate(1092.6,815.6) scale(0.636,1)" fill="#000" opacity="0.45" filter="url(#sh)">423down.com</text>
<text transform="translate(1091.6,814) scale(0.636,1)" fill="#0a0a0a">423down.com</text>
</g>
</svg>

</div>
</body>
</html>
